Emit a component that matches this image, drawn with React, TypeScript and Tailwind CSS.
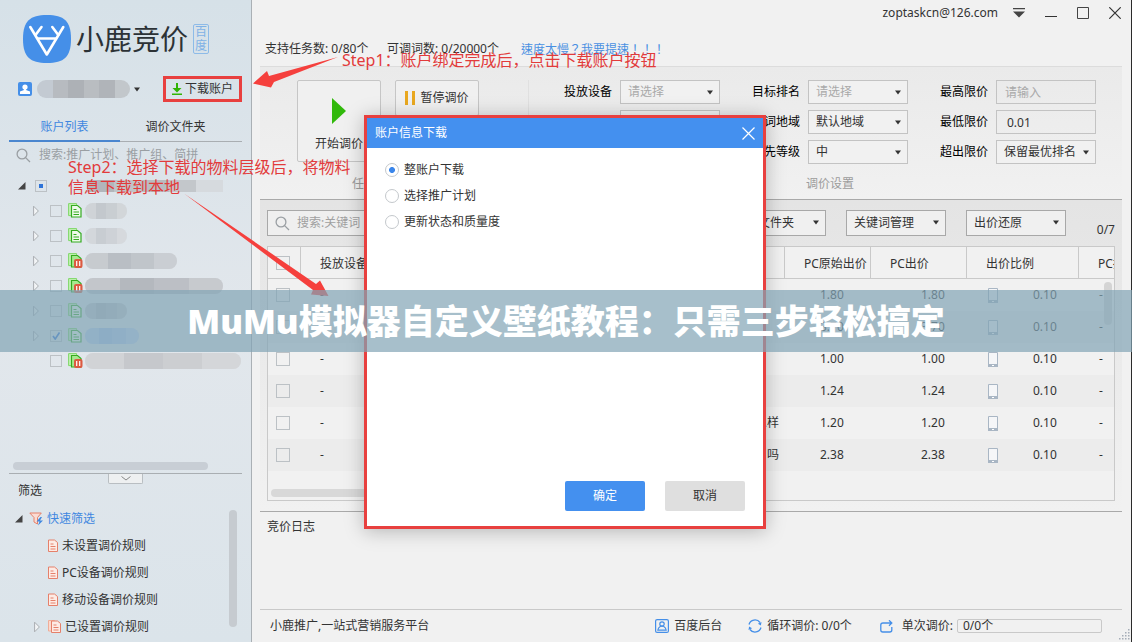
import React, { useState } from 'react'
import clsx from 'clsx'

const accounts = [
  { paused: false, checked: false, expandable: true, mask: 'w-[42px]', tint: 'bg-[#c3c8cd]' },
  { paused: false, checked: false, expandable: true, mask: 'w-[42px]', tint: 'bg-[#c8cdd2]' },
  { paused: true, checked: false, expandable: true, mask: 'w-[92px]', tint: 'bg-[#b9bec4]' },
  { paused: true, checked: false, expandable: true, mask: 'w-[138px]', tint: 'bg-[#b4b8be]' },
  { paused: false, checked: false, expandable: true, mask: 'w-[42px]', tint: 'bg-[#b4b8be]' },
  { paused: false, checked: true, expandable: true, mask: 'w-[54px]', tint: 'bg-[#a9c4ec]' },
  { paused: true, checked: false, expandable: false, mask: 'w-[156px]', tint: 'bg-[#c6c8cc]' },
]

const rules = ['未设置调价规则', 'PC设备调价规则', '移动设备调价规则']

const rows = [
  { name: '小鹿竞价', origin: '1.80', price: '1.80' },
  { name: '竞价软件', origin: '3.70', price: '3.70' },
  { name: '推广', origin: '1.00', price: '1.00' },
  { name: '调价', origin: '1.24', price: '1.24' },
  { name: '怎么样', origin: '1.20', price: '1.20', alignEnd: true },
  { name: '好用 吗', origin: '2.38', price: '2.38', alignEnd: true },
]

const downloadOptions = ['整账户下载', '选择推广计划', '更新状态和质量度']

function Logo() {
  return (
    <svg width="48" height="48" viewBox="0 0 48 48" fill="none">
      <path
        d="M24 0C41 0 48 6 48 24S41 48 24 48 0 42 0 24 7 0 24 0Z"
        fill="#458fe8"
      />
      <g stroke="#fff" strokeWidth="2.6" strokeLinecap="round" strokeLinejoin="round">
        <path d="M7.300 12 23.800 39.500 40.300 12" />
        <path d="M15 23.500h17.500" />
        <path d="M18.500 12l-6 8" />
        <path d="M29.300 12l6 8" />
      </g>
    </svg>
  )
}

function Magnifier() {
  return (
    <svg width="15" height="15" viewBox="0 0 15 15" fill="none" stroke="#9a9fa3" strokeWidth="1.3">
      <circle cx="6" cy="6" r="4.900" />
      <path d="M9.600 9.600 14 14" />
    </svg>
  )
}

function Caret({ className }: { className?: string }) {
  return (
    <svg width="6" height="5" viewBox="0 0 6 5" className={className}>
      <path d="M0 .5h6L3 4.500Z" fill="#333" />
    </svg>
  )
}

function TreeArrow({ open }: { open?: boolean }) {
  if (open) {
    return (
      <svg width="8" height="8" viewBox="0 0 8 8" className="shrink-0">
        <path d="M7.500 0v7.500H0Z" fill="#444" />
      </svg>
    )
  }
  return (
    <svg width="6" height="12" viewBox="0 0 6 12" fill="none" className="shrink-0">
      <path d="M.6 1.200v9.600L5.400 6Z" fill="#f2f4f6" stroke="#a9adb1" />
    </svg>
  )
}

function AccountIcon({ paused }: { paused: boolean }) {
  return (
    <svg width="15" height="15" viewBox="0 0 15 15" fill="none" className="shrink-0">
      <path d="M.6.6h8v12h-8Z" fill="#c4f0b4" stroke="#7fd868" />
      <path
        d="M3.500 2.500h6l3.500 3v8.500h-9.500Z"
        fill={paused ? '#a8e88f' : '#eefaea'}
        stroke="#35ab20"
        strokeWidth="1.200"
      />
      {paused ? (
        <>
          <rect x="6" y="6" width="8.500" height="9" rx="2" fill="#dc5a41" />
          <path d="M8.700 8v5M11.700 8v5" stroke="#fff" strokeWidth="1.200" />
        </>
      ) : (
        <path d="M5.500 6.500h3M5.500 9h5.500M5.500 11.500h5.500" stroke="#35ab20" />
      )}
    </svg>
  )
}

function RuleIcon({ stacked }: { stacked?: boolean }) {
  return (
    <svg width={stacked ? 13 : 10} height="13" viewBox={stacked ? '-3 0 13 13' : '0 0 10 13'} fill="none" className="shrink-0">
      {stacked && <path d="M-2.500.5h6v10.500h-6Z" fill="#fbd9cd" stroke="#f0ad98" />}
      <path d="M.5 1h6l3 2.500v9H.5Z" fill="#fdebe5" stroke="#e5806a" />
      <path d="M2.500 5h3M2.500 7.500h5M2.500 10h5" stroke="#e5806a" />
    </svg>
  )
}

function CheckBox({ label, checked, small }: { label: string; checked?: boolean; small?: boolean }) {
  return (
    <span className="relative inline-flex shrink-0">
      <input
        type="checkbox"
        aria-label={label}
        defaultChecked={checked}
        className={clsx(
          'peer appearance-none border border-[#bcc1c5]',
          small ? 'h-3 w-3' : 'h-3.5 w-3.5',
        )}
      />
      <svg
        width="8"
        height="8"
        viewBox="0 0 8 8"
        fill="none"
        className="pointer-events-none absolute top-0.5 left-0.5 hidden peer-checked:block"
      >
        <path d="M1 4l2.200 3L7.500.5" stroke="#2f74d8" strokeWidth="1.700" />
      </svg>
    </span>
  )
}

type DropdownProps = {
  label: string
  value: string
  muted?: boolean
  tall?: boolean
}

function Dropdown({ label, value, muted, tall }: DropdownProps) {
  return (
    <div className="relative w-[100px] shrink-0">
      <select
        aria-label={label}
        className={clsx(
          'block w-full appearance-none border pl-[7px] leading-4 outline-none',
          tall ? 'h-[26px] border-[#a8a8a8] bg-[#f0f0f0]' : 'h-6 border-[#c3c3c3] bg-[#f1f1f1]',
          muted ? 'text-[#a9a9a9]' : 'text-[#333]',
        )}
      >
        <option>{value}</option>
      </select>
      <Caret className="pointer-events-none absolute top-[10px] right-[7px]" />
    </div>
  )
}

function Field({ label, children }: { label: string; children: React.ReactNode }) {
  return (
    <div className="flex items-center gap-2">
      <span className="w-20 text-right leading-4 text-black">{label}</span>
      {children}
    </div>
  )
}

function Sidebar() {
  const [tab, setTab] = useState('list')

  const tabClass = (name: string) =>
    clsx(
      'h-6 w-[111px] border-b-2 pb-[5px] leading-4',
      tab === name ? 'border-[#4a86cf] text-[#3f87e0]' : 'border-transparent',
    )

  return (
    <aside className="flex w-[252px] shrink-0 flex-col border-r border-[#aab0b5] bg-linear-to-b from-[#d6e1e8] via-[#e2e7ec] to-[#dbe4ea]">
      <div className="flex h-[70px] items-center gap-[5px] pt-2 pl-[23px]">
        <Logo />
        <span className="text-[28px] leading-8 text-[#2c3236]">小鹿竞价</span>
        <span className="flex h-[30px] w-4 flex-col items-center rounded-xs border border-[#8dbbe8] text-[12px] leading-[14px] text-[#7fb2e6]">
          <span>百</span>
          <span>度</span>
        </span>
      </div>

      <div className="flex h-[38px] items-center pr-[9px] pl-[18px]">
        <svg width="14" height="14" viewBox="0 0 14 14">
          <rect width="14" height="14" rx="2" fill="#458fe8" />
          <circle cx="7" cy="5" r="2.600" fill="#fff" />
          <path d="M6 6h2v2l4 1.500V12H2V9.500L6 8Z" fill="#fff" />
        </svg>
        <span className="ml-[5px] flex h-[18px] w-[93px] overflow-hidden rounded-full">
          <span className="flex-1 bg-[#c3cad2]" />
          <span className="flex-1 bg-[#b7bbc0]" />
          <span className="flex-1 bg-[#adb1b6]" />
          <span className="flex-1 bg-[#b9bdc1]" />
          <span className="flex-1 bg-[#b0b4b9]" />
          <span className="flex-1 bg-[#c2c7cb]" />
        </span>
        <Caret className="ml-1" />
        <button
          type="button"
          className="ml-auto flex h-[26px] w-[79px] items-center justify-center gap-[3px] border-3 border-[#e8403f] leading-4"
        >
          <svg width="10" height="12" viewBox="0 0 10 12" fill="#31b404">
            <path d="M4 0h2v5h3.500L5 9.500.5 5H4ZM0 10.500h10V12H0Z" />
          </svg>
          下载账户
        </button>
      </div>

      <div className="mx-[9px] mt-[10px] flex h-6 border-b border-[#a9aeb2]">
        <button type="button" className={tabClass('list')} onClick={() => setTab('list')}>
          账户列表
        </button>
        <button type="button" className={tabClass('folder')} onClick={() => setTab('folder')}>
          调价文件夹
        </button>
      </div>

      <label className="flex h-[26px] items-center gap-2 pl-4">
        <Magnifier />
        <input
          type="text"
          placeholder="搜索:推广计划、推广组、简拼"
          className="w-[200px] leading-4 outline-none placeholder:text-[#9a9fa3]"
        />
      </label>

      <ul className="flex-1 pt-[5px]">
        <li className="flex h-[25px] items-center pl-[18px]">
          <TreeArrow open />
          <span className="ml-[9px] flex h-3 w-3 items-center justify-center border border-[#bcc1c5]">
            <span className="h-1 w-1 bg-[#2f74d8]" />
          </span>
          <span className="ml-10 flex h-3 w-[136px] overflow-hidden">
            <span className="flex-1 bg-[#b2b6bb]" />
            <span className="flex-1 bg-[#c0c4c8]" />
            <span className="flex-1 bg-[#b8bcc1]" />
            <span className="flex-1 bg-[#c3c7cb]" />
            <span className="flex-1 bg-[#d6dade]" />
          </span>
        </li>
        {accounts.map((account, index) => (
          <li key={index} className="flex h-[25px] items-center pl-[33px]">
            <span className="w-[17px]">{account.expandable && <TreeArrow />}</span>
            <CheckBox small label={`账户${index + 1}`} checked={account.checked} />
            <span className="ml-1.5">
              <AccountIcon paused={account.paused} />
            </span>
            <span className={clsx('ml-0.5 flex h-4 overflow-hidden rounded-lg', account.mask, account.tint)}>
              <span className="w-1/4 bg-white/20" />
              <span className="w-1/4" />
              <span className="w-1/4 bg-white/10" />
              <span className="w-1/4 bg-white/25" />
            </span>
          </li>
        ))}
      </ul>

      <div className="ml-[13px] h-2 w-[195px] rounded-full bg-[#c8ced5]" />
      <div className="mx-[9px] mt-[3px] flex h-[10px] justify-center border-t border-[#a9aeb2]">
        <button
          type="button"
          aria-label="收起"
          className="flex h-[10px] w-[35px] items-center justify-center rounded-b-xs border border-t-0 border-[#b9bec2] bg-[#eef0f1]"
        >
          <svg width="10" height="5" viewBox="0 0 10 5" fill="none" stroke="#888">
            <path d="M.5.5 5 4 9.500.5" />
          </svg>
        </button>
      </div>

      <div className="flex h-[159px] pr-[14px]">
        <div className="flex-1">
          <h2 className="pl-[18px] leading-4">筛选</h2>
          <ul className="pt-1.5">
            <li className="flex h-[27px] items-center pl-[15px]">
              <TreeArrow open />
              <svg width="15" height="14" viewBox="0 0 15 14" fill="none" className="ml-1.5">
                <path d="M.8 1h11.500L8.500 5.500V12L5 10V5.500Z" fill="#fbdcd3" stroke="#e5806a" />
                <path d="M11.500 5 7.500 9.500h3L9 13.500l5-5h-3L13 5Z" fill="#3f87e0" />
              </svg>
              <span className="ml-[3px] text-[#3f87e0]">快速筛选</span>
            </li>
            {rules.map(rule => (
              <li key={rule} className="flex h-[27px] items-center gap-1 pl-12">
                <RuleIcon />
                {rule}
              </li>
            ))}
            <li className="flex h-[27px] items-center gap-1 pl-[34px]">
              <TreeArrow />
              <span className="pl-1">
                <RuleIcon stacked />
              </span>
              已设置调价规则
            </li>
          </ul>
        </div>
        <div className="mt-[27px] h-[117px] w-2 rounded-full bg-[#c6cbd0]" />
      </div>
    </aside>
  )
}

function TitleBar() {
  return (
    <div className="flex h-[26px] items-center justify-end pr-[10px]">
      <span className="text-[12px] leading-4">zoptaskcn@126.com</span>
      <button type="button" aria-label="菜单" className="ml-[15px]">
        <svg width="12" height="10" viewBox="0 0 12 10" fill="#444">
          <path d="M0 0h12v1.200H0ZM0 3.500h12L6 9.500Z" />
        </svg>
      </button>
      <button type="button" aria-label="最小化" className="ml-5">
        <svg width="12" height="12" viewBox="0 0 12 12" fill="#333">
          <path d="M0 9h12v1H0Z" />
        </svg>
      </button>
      <button type="button" aria-label="最大化" className="ml-5">
        <svg width="12" height="12" viewBox="0 0 12 12" fill="none" stroke="#444">
          <path d="M.5.5h11v11H.5Z" />
        </svg>
      </button>
      <button type="button" aria-label="关闭" className="ml-5">
        <svg width="12" height="12" viewBox="0 0 12 12" fill="none" stroke="#333" strokeWidth="1.200">
          <path d="M.3.3l11.400 11.400M11.700.3.3 11.700" />
        </svg>
      </button>
    </div>
  )
}

function Controls() {
  return (
    <section className="mr-[9px] ml-2 flex h-[133px] border-t border-[#dcdcdc] bg-linear-to-b from-[#eaeaea] to-[#f1f1f1] pt-[13px]">
      <div className="w-[269px] border-r border-[#e0e0e0] pl-[37px]">
        <div className="flex gap-[14px]">
          <button
            type="button"
            className="flex h-[82px] w-[84px] flex-col items-center justify-end gap-3 rounded-xs border border-[#c6c6c6] bg-[#f0f0f0] pb-[9px] leading-4"
          >
            <svg width="14" height="26" viewBox="0 0 14 26" fill="#31b90b">
              <path d="M0 0 14 13 0 26Z" />
            </svg>
            <span>开始调价</span>
          </button>
          <div className="flex flex-col gap-2.5">
            <button
              type="button"
              className="flex h-9 w-[84px] items-center justify-center gap-[5px] rounded-xs border border-[#c6c6c6] bg-[#f0f0f0] leading-4"
            >
              <svg width="10" height="14" viewBox="0 0 10 14" fill="#e9a820">
                <path d="M0 0h3v14H0ZM7 0h3v14H7Z" />
              </svg>
              暂停调价
            </button>
            <button
              type="button"
              className="h-9 w-[84px] rounded-xs border border-[#c6c6c6] bg-[#f0f0f0] leading-4"
            >
              停止调价
            </button>
          </div>
        </div>
        <p className="w-[182px] pt-3.5 text-center leading-4 text-[#9c9c9c]">任务调价控制</p>
      </div>
      <div className="flex-1 pl-[3px]">
        <div className="grid w-fit grid-flow-col grid-rows-3 gap-y-1.5">
          <Field label="投放设备">
            <Dropdown label="投放设备" value="请选择" muted />
          </Field>
          <Field label="匹配模式">
            <Dropdown label="匹配模式" value="请选择" muted />
          </Field>
          <Field label="调价频率">
            <Dropdown label="调价频率" value="请选择" muted />
          </Field>
          <Field label="目标排名">
            <Dropdown label="目标排名" value="请选择" muted />
          </Field>
          <Field label="关键词地域">
            <Dropdown label="关键词地域" value="默认地域" />
          </Field>
          <Field label="优先等级">
            <Dropdown label="优先等级" value="中" />
          </Field>
          <Field label="最高限价">
            <input
              type="text"
              aria-label="最高限价"
              placeholder="请输入"
              className="h-6 w-[100px] border border-[#c3c3c3] px-2 leading-4 placeholder:text-[#a9a9a9]"
            />
          </Field>
          <Field label="最低限价">
            <input
              type="text"
              aria-label="最低限价"
              defaultValue="0.01"
              className="h-6 w-[100px] border border-[#c3c3c3] px-2.5 leading-4"
            />
          </Field>
          <Field label="超出限价">
            <Dropdown label="超出限价" value="保留最优排名" />
          </Field>
        </div>
        <p className="pt-3 pl-1.5 text-center leading-4 text-[#9c9c9c]">调价设置</p>
      </div>
    </section>
  )
}

function Keywords() {
  const th = 'h-8 border-r border-b border-[#c9c9c9] pt-0.5 pl-[19px] text-left font-normal last:border-r-0'

  return (
    <section className="mr-[9px] ml-2 h-[312px] border-t border-[#a9a9a9] bg-linear-to-b from-[#e4e4e4] to-[#f1f1f1] px-[7px] pt-2.5">
      <div className="flex h-[26px] gap-5">
        <label className="flex w-[200px] items-center gap-[7px] border border-[#a8a8a8] bg-[#efefef] pl-[7px]">
          <Magnifier />
          <input
            type="text"
            placeholder="搜索:关键词"
            className="w-[150px] leading-4 outline-none placeholder:text-[#a0a0a0]"
          />
        </label>
        <div className="ml-auto flex gap-5">
          <Dropdown tall label="文件夹" value="调价文件夹" />
          <Dropdown tall label="关键词管理" value="关键词管理" />
          <Dropdown tall label="出价还原" value="出价还原" />
        </div>
        <span className="-ml-5 w-[49px] self-end text-right leading-3">0/7</span>
      </div>

      <div className="relative mt-2.5 h-[255px] overflow-hidden border border-[#c9c9c9] bg-[#f1f1f1]">
        <table className="w-full table-fixed border-separate border-spacing-0">
          <colgroup>
            <col className="w-[33px]" />
            <col className="w-[100px]" />
            <col />
            <col className="w-[86px]" />
            <col className="w-24" />
            <col className="w-28" />
            <col className="w-[35px]" />
          </colgroup>
          <thead>
            <tr className="whitespace-nowrap">
              <th className="h-8 border-r border-b border-[#c9c9c9] pl-2 text-left">
                <span className="flex">
                  <CheckBox label="全选" />
                </span>
              </th>
              <th className={th}>投放设备</th>
              <th className={th}>关键词</th>
              <th className={th}>PC原始出价</th>
              <th className={th}>PC出价</th>
              <th className={th}>出价比例</th>
              <th className={clsx(th, 'overflow-hidden')}>PC排名</th>
            </tr>
          </thead>
          <tbody>
            {rows.map(row => (
              <tr key={row.name} className="h-8 even:bg-[#ececec]">
                <td className="pl-2">
                  <span className="flex">
                    <CheckBox label={row.name} />
                  </span>
                </td>
                <td className="pl-[19px]">-</td>
                <td className={clsx('pr-1.5 pl-[19px]', row.alignEnd && 'text-right')}>{row.name}</td>
                <td className="pl-[35px]">{row.origin}</td>
                <td className="pl-[50px]">{row.price}</td>
                <td className="pl-[21px]">
                  <span className="flex items-center gap-[35px]">
                    <svg width="10" height="15" viewBox="0 0 10 15" fill="none">
                      <path d="M.5.5h9v14h-9Z" fill="#f5f6f8" stroke="#a9b6c4" />
                      <path d="M0 12h10v3H0Z" fill="#a9b6c4" />
                      <path d="M4 13.500h2" stroke="#fff" />
                    </svg>
                    0.10
                  </span>
                </td>
                <td className="pl-5">-</td>
              </tr>
            ))}
          </tbody>
        </table>
        <div className="absolute top-[35px] right-0.5 h-[43px] w-2 rounded-full bg-[#d4d4d4]" />
        <div className="absolute bottom-[3px] left-[3px] h-2 w-[400px] rounded-full bg-[#d8d8d8]" />
      </div>
    </section>
  )
}

function StatusBar() {
  return (
    <footer className="relative mr-[9px] ml-2 flex h-[33px] items-center border-t border-[#c9c9c9] pr-5 pl-[10px] leading-4">
      <span>小鹿推广,一站式营销服务平台</span>
      <a href="#" className="ml-auto flex items-center gap-[5px]">
        <svg width="14" height="14" viewBox="0 0 14 14" fill="none" stroke="#458fe8" strokeWidth="1.200">
          <rect x=".6" y=".6" width="12.800" height="12.800" rx="1.500" />
          <circle cx="7" cy="5" r="2.200" />
          <path d="M2.800 11.200h8.400C11 8.800 9.500 7.800 8.500 7.200h-3C4.500 7.800 3 8.800 2.800 11.200Z" />
        </svg>
        百度后台
      </a>
      <span className="ml-[26px] flex items-center gap-[5px]">
        <svg width="14" height="14" viewBox="0 0 14 14" fill="none" stroke="#458fe8" strokeWidth="1.300">
          <path d="M1 5.500A6.200 6.200 0 0 1 12 3.500M13 8.500A6.200 6.200 0 0 1 2 10.500" />
          <path d="M13.500 3l-.6 3.500-3-1.800ZM.5 11l.6-3.500 3 1.800Z" fill="#458fe8" stroke="none" />
        </svg>
        循环调价: 0/0个
      </span>
      <span className="ml-[28px] flex items-center gap-[9px]">
        <svg width="13" height="13" viewBox="0 0 13 13" fill="none" stroke="#458fe8" strokeWidth="1.300">
          <path d="M4 3H3Q.8 3 .8 5v5q0 2 2 2h7q2 0 2-2V7" />
          <path d="M4 3h7.500M9 .3 11.800 3 9 5.700" />
        </svg>
        单次调价:
      </span>
      <span className="ml-1 h-[14px] w-[145px] rounded-xs border border-[#c9c9c9] pl-[5px] leading-3">
        0/0个
      </span>
      <svg width="11" height="11" viewBox="0 0 11 11" fill="#a5adb8" className="absolute -right-2 bottom-0.5">
        <path d="M9 0h1.500v1.500H9ZM9 3h1.500v1.500H9ZM9 6h1.500v1.500H9ZM9 9h1.500v1.500H9ZM6 3h1.500v1.500H6ZM6 6h1.500v1.500H6ZM6 9h1.500v1.500H6ZM3 6h1.500v1.500H3ZM3 9h1.500v1.500H3ZM0 9h1.500v1.500H0Z" />
      </svg>
    </footer>
  )
}

function DownloadDialog() {
  const [selected, setSelected] = useState(downloadOptions[0])

  return (
    <div className="absolute inset-0 flex items-center justify-center pt-0.5 pr-0.5">
      <div
        role="dialog"
        aria-label="账户信息下载"
        className="flex h-[414px] w-[402px] flex-col border-3 border-[#e8403f] bg-white shadow-[0_2px_18px_rgba(0,0,0,0.25)]"
      >
        <div className="flex h-[30px] items-center justify-between bg-[#4490ef] pr-2 pl-2 text-white">
          <h2 className="leading-4">账户信息下载</h2>
          <button type="button" aria-label="关闭">
            <svg width="13" height="13" viewBox="0 0 13 13" fill="none" stroke="#fff" strokeWidth="1.200">
              <path d="M.5.5l12 12M12.500.5l-12 12" />
            </svg>
          </button>
        </div>
        <div className="flex flex-1 flex-col gap-[9px] pt-[14px] pl-[18px]">
          {downloadOptions.map(option => (
            <label key={option} className="flex items-center gap-[5px] pb-px leading-4">
              <input
                type="radio"
                name="download"
                checked={selected === option}
                onChange={() => setSelected(option)}
                className="h-3.5 w-3.5 appearance-none rounded-full border border-[#c4c8cc] bg-white checked:bg-radial checked:from-[#3a86ea] checked:from-30% checked:to-white checked:to-40%"
              />
              {option}
            </label>
          ))}
        </div>
        <div className="flex justify-end gap-5 pr-[18px] pb-[15px]">
          <button type="button" className="h-[30px] w-20 rounded-xs bg-[#4490ef] text-white">
            确定
          </button>
          <button type="button" className="h-[30px] w-20 rounded-xs bg-[#dfdfdf]">
            取消
          </button>
        </div>
      </div>
    </div>
  )
}

// red guide notes drawn over the window
function Guides() {
  return (
    <div className="pointer-events-none absolute inset-0 text-[16px] leading-5 text-[#e23b3b]">
      <svg width="340" height="300" viewBox="0 0 340 300" fill="#f5403d" className="absolute top-0 left-0">
        <path d="M338 57 269 76 267 71 253 83.500 271 87.500 274 82Z" />
        <path d="M184 193.500 316 284 320 280.500 328.500 296 311 294.500 313 290Z" />
      </svg>
      <p className="absolute top-[50px] left-[342px] whitespace-nowrap">
        Step1：账户绑定完成后，点击下载账户按钮
      </p>
      <p className="absolute top-[157px] left-[68px] whitespace-nowrap">
        Step2：选择下载的物料层级后，将物料
        <br />
        信息下载到本地
      </p>
    </div>
  )
}

function App() {
  return (
    <div className="relative flex min-h-screen overflow-hidden bg-[#f1f1f1] font-['Noto_Sans','Noto_Sans_CJK_SC',sans-serif] text-[12px] text-[#333]">
      <Sidebar />
      <main className="flex min-w-0 flex-1 flex-col border-r border-[#2b2b2b]">
        <TitleBar />
        <div className="flex h-10 items-center pt-1.5 pl-[13px] leading-4">
          <span className="w-[122px]">支持任务数: 0/80个</span>
          <span className="w-[134px]">可调词数: 0/20000个</span>
          <a href="#" className="font-['Noto_Sans_CJK_TC','Noto_Sans_CJK_SC',sans-serif] text-[#4a90e2]">
            速度太慢？我要提速！！！
          </a>
        </div>
        <Controls />
        <Keywords />
        <section className="mr-[9px] ml-2 flex-1 border-t border-[#a9a9a9] pt-[7px] pl-[7px]">
          <h2 className="leading-4">竞价日志</h2>
        </section>
        <StatusBar />
      </main>
      <DownloadDialog />
      <Guides />
      <div className="pointer-events-none absolute inset-0 flex items-center">
        <h1 className="h-[62px] w-full bg-[rgba(129,164,181,0.7)] text-center text-[34px] leading-[62px] font-black text-white">
          MuMu模拟器自定义壁纸教程：只需三步轻松搞定
        </h1>
      </div>
    </div>
  )
}

export default App
